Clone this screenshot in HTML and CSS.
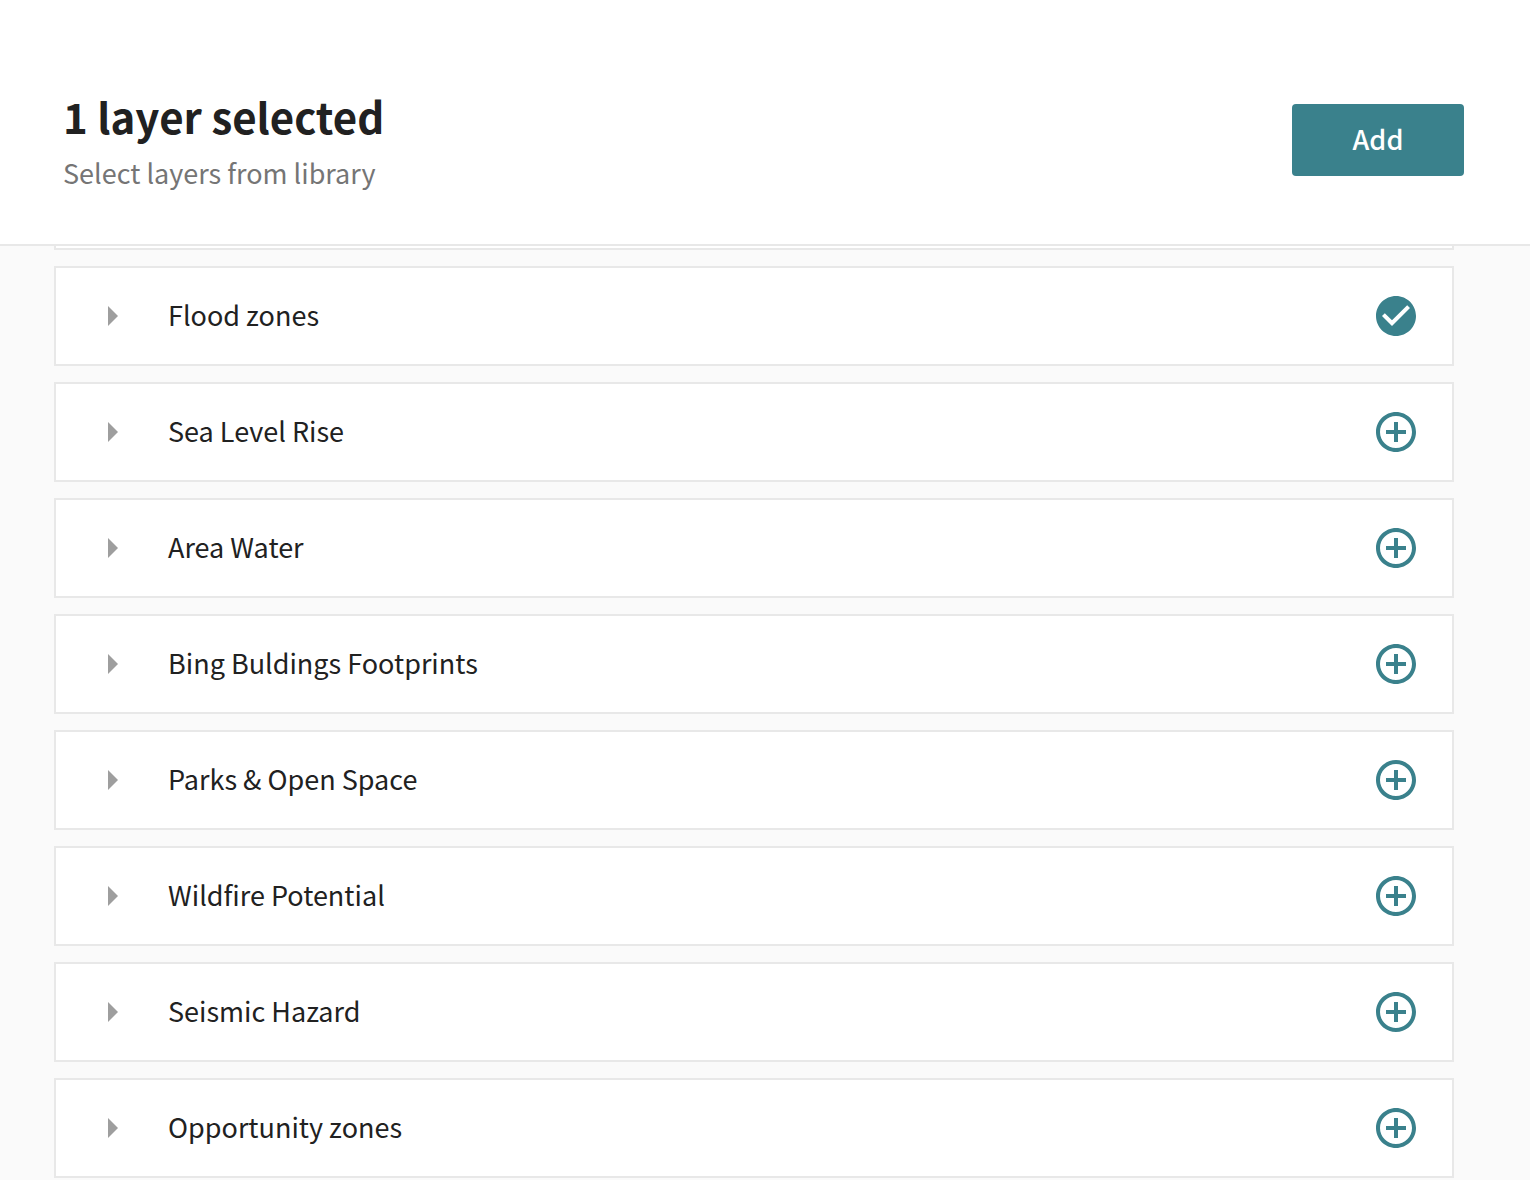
FILE: index.html
```html
<!DOCTYPE html>
<html lang="en">
<head>
<meta charset="utf-8">
<meta name="viewport" content="width=device-width, initial-scale=1">
<title>Layer library</title>
<link rel="stylesheet" href="styles.css">
</head>
<body>
<svg class="sprite" aria-hidden="true">
  <symbol id="caret" viewBox="0 0 10 20"><path d="M0 0l10 10L0 20z"/></symbol>
  <symbol id="plus" viewBox="2 2 20 20"><path d="M13 7h-2v4H7v2h4v4h2v-4h4v-2h-4V7zm-1-5C6.480 2 2 6.480 2 12s4.480 10 10 10 10-4.480 10-10S17.520 2 12 2zm0 18c-4.410 0-8-3.590-8-8s3.590-8 8-8 8 3.590 8 8-3.590 8-8 8z"/></symbol>
  <symbol id="check" viewBox="2 2 20 20"><path d="M12 2C6.480 2 2 6.480 2 12s4.480 10 10 10 10-4.480 10-10S17.520 2 12 2zm-2 15l-5-5 1.410-1.410L10 14.170l7.590-7.590L19 8l-9 9z"/></symbol>
</svg>
<header class="header">
  <div class="heading">
    <h1 class="title">1 layer selected</h1>
    <p class="subtitle">Select layers from library</p>
  </div>
  <button class="add" type="button">Add</button>
</header>
<main class="library">
  <div class="scrolled-card"></div>
  <ul class="layers">
    <li class="layer">
      <button class="expand" type="button"><svg class="caret"><use href="#caret"/></svg><span class="name">Flood zones</span></button>
      <button class="pick" type="button" aria-label="Remove Flood zones"><svg class="icon"><use href="#check"/></svg></button>
    </li>
    <li class="layer">
      <button class="expand" type="button"><svg class="caret"><use href="#caret"/></svg><span class="name">Sea Level Rise</span></button>
      <button class="pick" type="button" aria-label="Select Sea Level Rise"><svg class="icon"><use href="#plus"/></svg></button>
    </li>
    <li class="layer">
      <button class="expand" type="button"><svg class="caret"><use href="#caret"/></svg><span class="name">Area Water</span></button>
      <button class="pick" type="button" aria-label="Select Area Water"><svg class="icon"><use href="#plus"/></svg></button>
    </li>
    <li class="layer">
      <button class="expand" type="button"><svg class="caret"><use href="#caret"/></svg><span class="name">Bing Buldings Footprints</span></button>
      <button class="pick" type="button" aria-label="Select Bing Buldings Footprints"><svg class="icon"><use href="#plus"/></svg></button>
    </li>
    <li class="layer">
      <button class="expand" type="button"><svg class="caret"><use href="#caret"/></svg><span class="name">Parks &amp; Open Space</span></button>
      <button class="pick" type="button" aria-label="Select Parks &amp; Open Space"><svg class="icon"><use href="#plus"/></svg></button>
    </li>
    <li class="layer">
      <button class="expand" type="button"><svg class="caret"><use href="#caret"/></svg><span class="name">Wildfire Potential</span></button>
      <button class="pick" type="button" aria-label="Select Wildfire Potential"><svg class="icon"><use href="#plus"/></svg></button>
    </li>
    <li class="layer">
      <button class="expand" type="button"><svg class="caret"><use href="#caret"/></svg><span class="name">Seismic Hazard</span></button>
      <button class="pick" type="button" aria-label="Select Seismic Hazard"><svg class="icon"><use href="#plus"/></svg></button>
    </li>
    <li class="layer">
      <button class="expand" type="button"><svg class="caret"><use href="#caret"/></svg><span class="name">Opportunity zones</span></button>
      <button class="pick" type="button" aria-label="Select Opportunity zones"><svg class="icon"><use href="#plus"/></svg></button>
    </li>
  </ul>
</main>
</body>
</html>
```
FILE: styles.css
```css
* {
  box-sizing: border-box;
}

body {
  margin: 0;
  background: #fafafa;
  color: #212121;
  font-family: "Source Sans Pro", "Noto Sans CJK SC", sans-serif;
  font-size: 27px;
  line-height: 40px;
}

button {
  border: 0;
  padding: 0;
  background: none;
  color: inherit;
  font: inherit;
  cursor: pointer;
}

.sprite {
  display: none;
}

.header {
  display: flex;
  justify-content: space-between;
  align-items: flex-start;
  padding: 84px 66px 51px 63px;
  background: #fff;
  border-bottom: 2px solid #e8e8e8;
}

.title {
  margin: 0;
  font-size: 42px;
  font-weight: 700;
  line-height: 64px;
}

.subtitle {
  margin: 5px 0 0;
  color: #757575;
}

.add {
  width: 172px;
  height: 72px;
  margin-top: 20px;
  padding-bottom: 2px;
  border-radius: 4px;
  background: #3a818c;
  color: #fff;
  font-weight: 500;
}

.library {
  padding: 0 76px 2px 54px;
}

.scrolled-card {
  height: 4px;
  margin-bottom: 16px;
  border: 2px solid #e8e8e8;
  border-top: 0;
  background: #fff;
}

.layers {
  display: flex;
  flex-direction: column;
  gap: 16px;
  margin: 0;
  padding: 0;
  list-style: none;
}

.layer {
  display: flex;
  align-items: center;
  height: 100px;
  padding-right: 36px;
  border: 2px solid #e8e8e8;
  background: #fff;
}

.expand {
  display: flex;
  flex: 1;
  align-items: center;
  gap: 50px;
  height: 100%;
  padding-left: 52px;
  text-align: left;
}

.name {
  padding-bottom: 2px;
}

.caret {
  width: 10px;
  height: 20px;
  fill: #9e9e9e;
}

.pick {
  width: 40px;
  height: 40px;
}

.icon {
  display: block;
  width: 40px;
  height: 40px;
  fill: #3a818c;
}
```
